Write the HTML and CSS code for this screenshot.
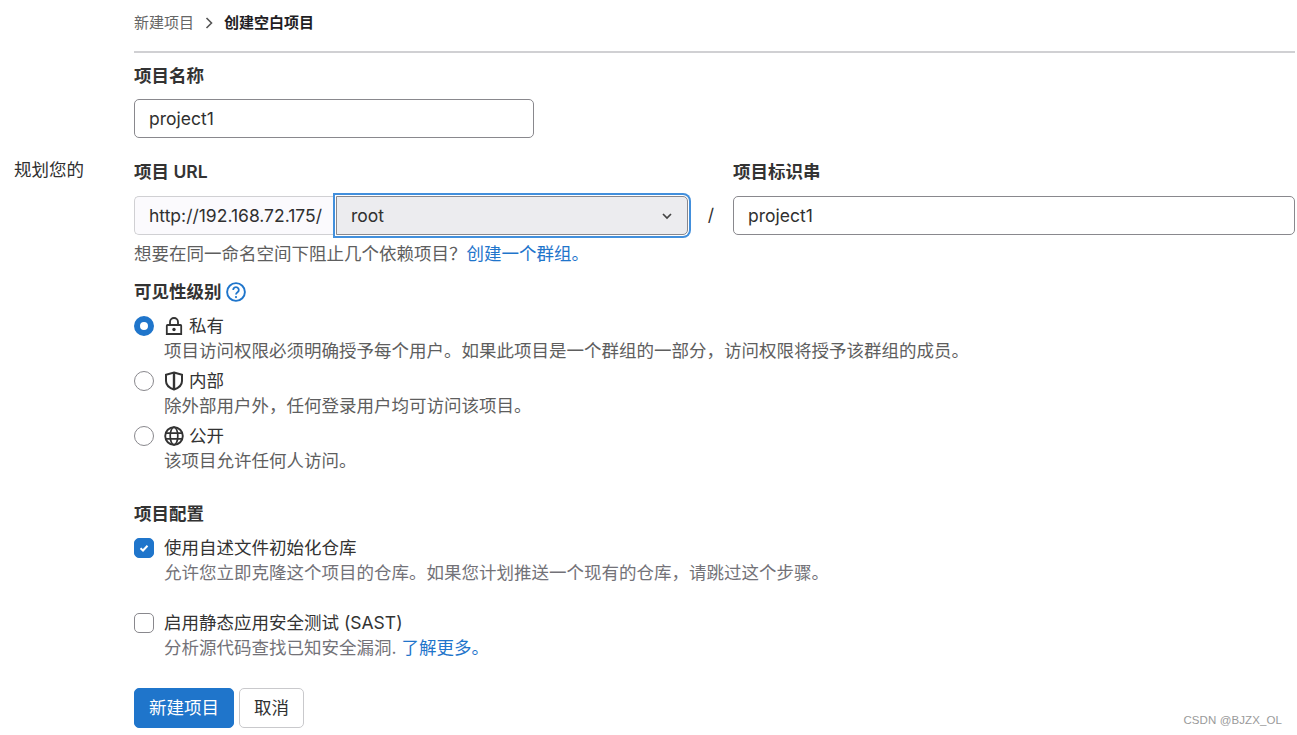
FILE: index.html
```html
<!DOCTYPE html>
<html lang="zh-CN">
<head>
<meta charset="utf-8">
<title>创建空白项目</title>
<link rel="stylesheet" href="styles.css">
</head>
<body>
<div class="page">
  <div class="side">规划您的</div>
  <main class="main">
    <nav class="crumbs">
      <span class="crumb-link">新建项目</span>
      <svg class="crumb-sep" viewBox="0 0 10 14" width="10" height="14"><path d="M2.500 2 7.500 7 2.500 12" fill="none" stroke="#555" stroke-width="1.600"/></svg>
      <strong class="crumb-current">创建空白项目</strong>
    </nav>
    <form class="form">
      <div class="label name-label">项目名称</div>
      <div class="input name-input">project1</div>

      <div class="url-row">
        <div class="url-col">
          <div class="label">项目 URL</div>
          <div class="url-group">
            <div class="prefix">http://192.168.72.175/</div>
            <div class="select">
              <span>root</span>
              <svg viewBox="0 0 12 12" width="12" height="12"><path d="M2 4 6 8 10 4" fill="none" stroke="#444" stroke-width="1.700"/></svg>
            </div>
          </div>
        </div>
        <div class="slash">/</div>
        <div class="slug-col">
          <div class="label">项目标识串</div>
          <div class="input slug-input">project1</div>
        </div>
      </div>
      <p class="help">想要在同一命名空间下阻止几个依赖项目？<a class="link">创建一个群组。</a></p>

      <div class="label vis-label">可见性级别
        <svg class="help-icon" viewBox="0 0 20 20" width="20" height="20"><circle cx="10" cy="10" r="8.900" fill="none" stroke="#1f75cb" stroke-width="1.900"/><path d="M7.200 8a2.800 2.800 0 1 1 4.300 2.300c-1 .7-1.500 1.100-1.500 2.300" fill="none" stroke="#1f75cb" stroke-width="1.800"/><circle cx="10" cy="15.100" r="1.100" fill="#1f75cb"/></svg>
      </div>

      <div class="option">
        <span class="radio radio-on"></span>
        <div class="opt-body">
          <div class="opt-title">
            <svg viewBox="0 0 20 20" width="20" height="20"><path d="M3.500 9h13a.7.7 0 0 1 .7.7V18H2.800V9.700A.7.7 0 0 1 3.500 9ZM6 9V6a4 4 0 0 1 8 0v3" fill="none" stroke="#333" stroke-width="1.800"/><circle cx="10" cy="13.500" r="1.700" fill="#333"/></svg>
            私有
          </div>
          <div class="desc">项目访问权限必须明确授予每个用户。如果此项目是一个群组的一部分，访问权限将授予该群组的成员。</div>
        </div>
      </div>
      <div class="option">
        <span class="radio"></span>
        <div class="opt-body">
          <div class="opt-title">
            <svg viewBox="0 0 20 20" width="20" height="20"><path d="M10 1.500 18 3.800V10c0 4.200-3.400 7-8 8.500-4.600-1.500-8-4.300-8-8.500V3.800L10 1.500Z" fill="none" stroke="#333" stroke-width="2"/><path d="M10 2V18" stroke="#333" stroke-width="2.400"/></svg>
            内部
          </div>
          <div class="desc">除外部用户外，任何登录用户均可访问该项目。</div>
        </div>
      </div>
      <div class="option">
        <span class="radio"></span>
        <div class="opt-body">
          <div class="opt-title">
            <svg viewBox="0 0 20 20" width="20" height="20"><circle cx="10" cy="10" r="8.800" fill="none" stroke="#333" stroke-width="1.900"/><ellipse cx="10" cy="10" rx="3.800" ry="8.800" fill="none" stroke="#333" stroke-width="1.700"/><path d="M1.500 7.200h17M1.500 12.800h17" stroke="#333" stroke-width="1.700"/></svg>
            公开
          </div>
          <div class="desc">该项目允许任何人访问。</div>
        </div>
      </div>

      <div class="label config-label">项目配置</div>
      <div class="option">
        <span class="check check-on">
          <svg viewBox="0 0 12 12" width="12" height="12"><path d="M2.500 6.300 5 8.500 9.500 3.800" fill="none" stroke="#fff" stroke-width="2"/></svg>
        </span>
        <div class="opt-body">
          <div class="opt-title">使用自述文件初始化仓库</div>
          <div class="desc muted">允许您立即克隆这个项目的仓库。如果您计划推送一个现有的仓库，请跳过这个步骤。</div>
        </div>
      </div>
      <div class="option sast">
        <span class="check"></span>
        <div class="opt-body">
          <div class="opt-title">启用静态应用安全测试 (SAST)</div>
          <div class="desc muted">分析源代码查找已知安全漏洞. <a class="link">了解更多。</a></div>
        </div>
      </div>

      <div class="actions">
        <button type="button" class="btn btn-primary">新建项目</button>
        <button type="button" class="btn">取消</button>
      </div>
    </form>
  </main>
</div>
<div class="watermark">CSDN @BJZX_OL</div>
</body>
</html>
```
FILE: styles.css
```css
* { box-sizing: border-box; }
html, body { margin: 0; padding: 0; height: 100%; overflow: hidden; }
body {
  background: #fff;
  color: #303030;
  font-family: Inter, "Noto Sans CJK SC", sans-serif;
  font-size: 17.5px;
  line-height: 25px;
  position: relative;
}
.page { display: flex; }
.side { width: 134px; flex: none; padding: 157px 0 0 14px; }
.main { width: 1161px; flex: none; }
.crumbs {
  height: 53px;
  border-bottom: 2px solid #d0d0d3;
  display: flex;
  align-items: center;
  gap: 6px;
  padding-bottom: 6px;
  font-size: 15px;
}
.crumb-link { color: #666; }
.crumb-sep { margin: 0 4px 0 4px; }
.crumb-current { color: #1f1e24; font-weight: 600; }
.label { font-weight: 600; color: #333; line-height: 25px; }
.name-label { margin-top: 10px; }
.input {
  height: 39px;
  border: 1px solid #89888d;
  border-radius: 5px;
  background: #fff;
  padding: 0 14px;
  display: flex;
  align-items: center;
  color: #303030;
}
.name-input { width: 400px; margin-top: 11px; }
.url-row { display: flex; margin-top: 21px; }
.url-col { width: 554px; flex: none; }
.url-group { display: flex; margin-top: 12px; height: 39px; }
.prefix {
  width: 202px;
  flex: none;
  background: #fbfafd;
  border: 1px solid #d0d0d3;
  border-right: 0;
  border-radius: 5px 0 0 5px;
  padding: 0 0 0 14px;
  display: flex;
  align-items: center;
  white-space: nowrap;
}
.select {
  width: 352px;
  flex: none;
  background: #ececef;
  border: 1px solid #89888d;
  border-radius: 0 5px 5px 0;
  box-shadow: 0 0 0 1px #fff, 0 0 0 3px #428fdc;
  padding: 0 14px;
  display: flex;
  align-items: center;
  justify-content: space-between;
  position: relative;
}
.slash { width: 46px; flex: none; text-align: center; padding-top: 43px; }
.slug-col { width: 562px; flex: none; margin-left: -1px; }
.slug-input { margin-top: 12px; }
.help { margin: 6px 0 0; color: #5e5e5e; height: 25px; }
.link { color: #1f75cb; }
.vis-label { margin-top: 13px; display: flex; align-items: center; gap: 4px; }
.help-icon { flex: none; }
.option { display: flex; gap: 10px; margin-top: 5px; }
.vis-label + .option { margin-top: 9px; }
.radio, .check {
  width: 20px;
  height: 20px;
  flex: none;
  border: 1px solid #89888d;
  background: #fff;
  margin-top: 3px;
}
.radio { border-radius: 50%; }
.radio-on { border: 6px solid #1f75cb; }
.check { border-radius: 5px; display: flex; align-items: center; justify-content: center; }
.check-on { background: #1f75cb; border-color: #1f75cb; }
.opt-body { min-width: 0; }
.opt-title { display: flex; align-items: center; gap: 5px; height: 25px; color: #333; }
.desc { color: #5e5e5e; height: 25px; }
.muted { color: #737278; }
.muted .link { color: #1f75cb; }
.config-label { margin-top: 28px; }
.config-label + .option { margin-top: 9px; }
.sast { margin-top: 25px; }
.actions { display: flex; gap: 5px; margin-top: 28px; }
.btn {
  height: 40px;
  padding: 0 14px 2px;
  border: 1px solid #c9c9cc;
  border-radius: 5px;
  background: #fff;
  color: #303030;
  font: inherit;
}
.btn-primary { background: #1f75cb; border-color: #1f75cb; color: #fff; }
.watermark {
  position: absolute;
  right: 15px;
  top: 711px;
  font-size: 11.500px;
  line-height: 18px;
  letter-spacing: 0.100px;
  color: #9a9a9a;
  font-family: "Liberation Sans", sans-serif;
}
```
